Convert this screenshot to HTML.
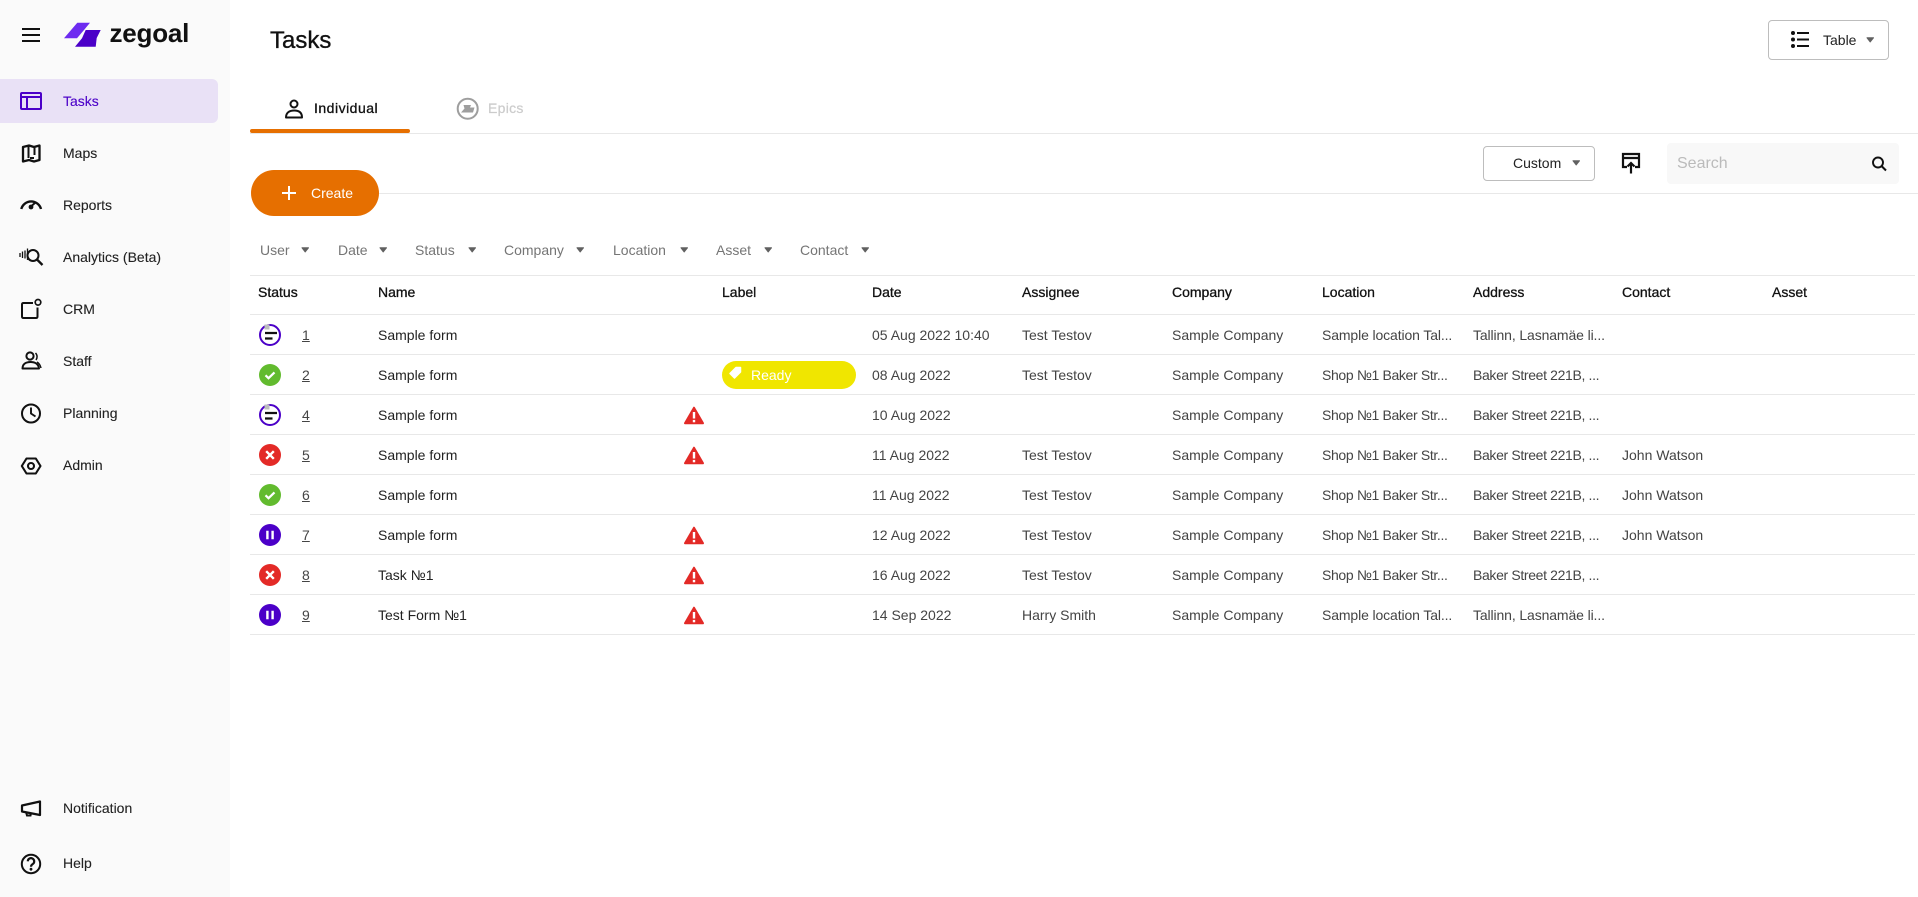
<!DOCTYPE html>
<html lang="en"><head><meta charset="utf-8"><title>Tasks</title>
<style>
html,body{margin:0;padding:0;width:1918px;height:897px;overflow:hidden;background:#fff}
body{position:relative;font-family:"Liberation Sans",sans-serif;font-size:14px;color:#222}
.a{position:absolute;white-space:nowrap}
#side{position:absolute;left:0;top:0;width:230px;height:897px;background:#fafafa}
#act{position:absolute;left:0;top:79px;width:218px;height:44px;background:#e9e1f6;border-radius:0 6px 6px 0}
.m{position:absolute;left:63px;line-height:20px;color:#222;-webkit-text-stroke:.1px #222}
.ln{position:absolute;height:1px;background:#e8e8e8}
.f{position:absolute;top:240px;line-height:20px;color:#757575}
.h{position:absolute;top:282px;line-height:20px;color:#111;-webkit-text-stroke:.3px #111}
.c{position:absolute;line-height:20px;color:#444;white-space:nowrap}
.n{color:#222}
.u{text-decoration:underline}
.s{letter-spacing:-.35px}
.t{letter-spacing:-.12px}
.r{position:absolute;left:0;width:1918px;height:20px}
.btn{position:absolute;border:1px solid #bdbdbd;border-radius:4px;box-sizing:border-box;background:#fff}
</style></head><body>
<div id="side"><div id="act"></div></div>
<div class="a" style="left:109.5px;top:15px;font-size:26px;line-height:36px;font-weight:700;color:#111;letter-spacing:-.2px">zegoal</div>

<div class="m" style="top:91px;color:#4b00c8;-webkit-text-stroke:.1px #4b00c8">Tasks</div>
<div class="m" style="top:143px">Maps</div>
<div class="m" style="top:195px">Reports</div>
<div class="m" style="top:247px">Analytics (Beta)</div>
<div class="m" style="top:299px">CRM</div>
<div class="m" style="top:351px">Staff</div>
<div class="m" style="top:403px">Planning</div>
<div class="m" style="top:455px">Admin</div>
<div class="m" style="top:798px">Notification</div>
<div class="m" style="top:853px">Help</div>

<div class="a" style="left:270px;top:27px;font-size:24px;line-height:28px;color:#111;-webkit-text-stroke:.35px #111">Tasks</div>
<div class="a" style="left:314px;top:98px;line-height:20px;color:#111;letter-spacing:.5px;-webkit-text-stroke:.3px #111">Individual</div>
<div class="a" style="left:488px;top:98px;line-height:20px;color:#ccc;letter-spacing:.3px;-webkit-text-stroke:.25px #ccc">Epics</div>

<div class="ln" style="left:250px;top:133px;width:1668px"></div>
<div class="a" style="left:250px;top:129px;width:160px;height:4px;background:#e66f00;border-radius:2px"></div>
<div class="ln" style="left:370px;top:193px;width:1548px"></div>
<div class="a" style="left:251px;top:170px;width:128px;height:46px;background:#e66f00;border-radius:23px"></div>
<div class="a" style="left:311px;top:183px;line-height:20px;color:#fff">Create</div>

<div class="btn" style="left:1768px;top:20px;width:121px;height:40px"></div>
<div class="a" style="left:1823px;top:30px;line-height:20px;color:#222">Table</div>
<div class="btn" style="left:1483px;top:146px;width:112px;height:35px"></div>
<div class="a" style="left:1513px;top:153px;line-height:20px;color:#222">Custom</div>
<div class="a" style="left:1667px;top:143px;width:232px;height:41px;background:#f8f8f8;border-radius:4px"></div>
<div class="a" style="left:1677px;top:154px;line-height:20px;font-size:16px;color:#bbb">Search</div>

<div class="f" style="left:260px">User</div>
<div class="f" style="left:338px">Date</div>
<div class="f" style="left:415px">Status</div>
<div class="f" style="left:504px">Company</div>
<div class="f" style="left:613px">Location</div>
<div class="f" style="left:716px">Asset</div>
<div class="f" style="left:800px">Contact</div>

<div class="ln" style="left:250px;top:275px;width:1665px"></div>
<div class="h" style="left:258px">Status</div>
<div class="h" style="left:378px">Name</div>
<div class="h" style="left:722px">Label</div>
<div class="h" style="left:872px">Date</div>
<div class="h" style="left:1022px">Assignee</div>
<div class="h" style="left:1172px">Company</div>
<div class="h" style="left:1322px">Location</div>
<div class="h" style="left:1473px">Address</div>
<div class="h" style="left:1622px">Contact</div>
<div class="h" style="left:1772px">Asset</div>

<div class="ln" style="left:250px;top:314px;width:1665px"></div>
<div class="ln" style="left:250px;top:354px;width:1665px"></div>
<div class="ln" style="left:250px;top:394px;width:1665px"></div>
<div class="ln" style="left:250px;top:434px;width:1665px"></div>
<div class="ln" style="left:250px;top:474px;width:1665px"></div>
<div class="ln" style="left:250px;top:514px;width:1665px"></div>
<div class="ln" style="left:250px;top:554px;width:1665px"></div>
<div class="ln" style="left:250px;top:594px;width:1665px"></div>
<div class="ln" style="left:250px;top:634px;width:1665px"></div>

<div class="r" style="top:325px">
<div class="c u" style="left:302px">1</div><div class="c n" style="left:378px">Sample form</div><div class="c" style="left:872px">05 Aug 2022 10:40</div><div class="c" style="left:1022px">Test Testov</div><div class="c" style="left:1172px">Sample Company</div><div class="c t" style="left:1322px">Sample location Tal...</div><div class="c t" style="left:1473px">Tallinn, Lasnamäe li...</div>
</div>
<div class="r" style="top:365px">
<div class="c u" style="left:302px">2</div><div class="c n" style="left:378px">Sample form</div><div class="c" style="left:872px">08 Aug 2022</div><div class="c" style="left:1022px">Test Testov</div><div class="c" style="left:1172px">Sample Company</div><div class="c s" style="left:1322px">Shop №1 Baker Str...</div><div class="c s" style="left:1473px">Baker Street 221B, ...</div>
</div>
<div class="a" style="left:722px;top:361px;width:134px;height:28px;background:#f0e600;border-radius:14px"></div>
<div class="a" style="left:751px;top:365px;line-height:20px;color:#fff">Ready</div>
<div class="r" style="top:405px">
<div class="c u" style="left:302px">4</div><div class="c n" style="left:378px">Sample form</div><div class="c" style="left:872px">10 Aug 2022</div><div class="c" style="left:1172px">Sample Company</div><div class="c s" style="left:1322px">Shop №1 Baker Str...</div><div class="c s" style="left:1473px">Baker Street 221B, ...</div>
</div>
<div class="r" style="top:445px">
<div class="c u" style="left:302px">5</div><div class="c n" style="left:378px">Sample form</div><div class="c" style="left:872px">11 Aug 2022</div><div class="c" style="left:1022px">Test Testov</div><div class="c" style="left:1172px">Sample Company</div><div class="c s" style="left:1322px">Shop №1 Baker Str...</div><div class="c s" style="left:1473px">Baker Street 221B, ...</div><div class="c" style="left:1622px">John Watson</div>
</div>
<div class="r" style="top:485px">
<div class="c u" style="left:302px">6</div><div class="c n" style="left:378px">Sample form</div><div class="c" style="left:872px">11 Aug 2022</div><div class="c" style="left:1022px">Test Testov</div><div class="c" style="left:1172px">Sample Company</div><div class="c s" style="left:1322px">Shop №1 Baker Str...</div><div class="c s" style="left:1473px">Baker Street 221B, ...</div><div class="c" style="left:1622px">John Watson</div>
</div>
<div class="r" style="top:525px">
<div class="c u" style="left:302px">7</div><div class="c n" style="left:378px">Sample form</div><div class="c" style="left:872px">12 Aug 2022</div><div class="c" style="left:1022px">Test Testov</div><div class="c" style="left:1172px">Sample Company</div><div class="c s" style="left:1322px">Shop №1 Baker Str...</div><div class="c s" style="left:1473px">Baker Street 221B, ...</div><div class="c" style="left:1622px">John Watson</div>
</div>
<div class="r" style="top:565px">
<div class="c u" style="left:302px">8</div><div class="c n" style="left:378px">Task №1</div><div class="c" style="left:872px">16 Aug 2022</div><div class="c" style="left:1022px">Test Testov</div><div class="c" style="left:1172px">Sample Company</div><div class="c s" style="left:1322px">Shop №1 Baker Str...</div><div class="c s" style="left:1473px">Baker Street 221B, ...</div>
</div>
<div class="r" style="top:605px">
<div class="c u" style="left:302px">9</div><div class="c n" style="left:378px">Test Form №1</div><div class="c" style="left:872px">14 Sep 2022</div><div class="c" style="left:1022px">Harry Smith</div><div class="c" style="left:1172px">Sample Company</div><div class="c t" style="left:1322px">Sample location Tal...</div><div class="c t" style="left:1473px">Tallinn, Lasnamäe li...</div>
</div>

<svg width="1918" height="897" viewBox="0 0 1918 897" style="position:absolute;left:0;top:0" fill="none">
<defs>
<g id="tri"><path d="M0 -7.8 L9 7.8 H-9 Z" fill="#e32a27" stroke="#e32a27" stroke-width="2" stroke-linejoin="round"/><path d="M0 -3.5 V3" stroke="#fff" stroke-width="2.4"/><rect x="-1.2" y="4.4" width="2.4" height="2.4" fill="#fff"/></g>
<g id="ok"><circle r="11" fill="#62bb2e"/><path d="M-4.5 .3 L-1.5 3.2 L4.5 -2.6" stroke="#fff" stroke-width="2.2"/></g>
<g id="no"><circle r="11" fill="#e32a27"/><path d="M-3.8 -3.8 L3.8 3.8 M3.8 -3.8 L-3.8 3.8" stroke="#fff" stroke-width="2.4"/></g>
<g id="pa"><circle r="11" fill="#4b00c8"/><path d="M-2.6 -4.2 V4.2 M2.6 -4.2 V4.2" stroke="#fff" stroke-width="2.4"/></g>
<g id="pr"><circle r="10" fill="#fff" stroke="#4b00c8" stroke-width="2"/><rect x="-5.5" y="-10.5" width="5" height="5" fill="#bdbdbd"/><path d="M-5 -2 H7 M-5 3.5 H2.5" stroke="#111" stroke-width="2.2"/></g>
</defs>
<!-- logo -->
<path d="M64 38.3 L77.3 22.7 H90 L84 30 L77 38.3 Z" fill="#6d2bf0"/>
<path d="M85.7 30 H100.7 L96.7 38 L95.7 46.7 H75 L82 38.3 Z" fill="#4b00c8"/>
<!-- hamburger -->
<path d="M22 29 H40 M22 35 H40 M22 41 H40" stroke="#111" stroke-width="2"/>
<!-- tasks -->
<rect x="21" y="93" width="20" height="16" rx="1" stroke="#4b00c8" stroke-width="2"/><path d="M21 97 H41 M27 97 V109" stroke="#4b00c8" stroke-width="2"/>
<!-- maps -->
<path d="M23 147 L29 145.5 L34 147 L39.5 145.5 V160 L34 161.5 L29 160 L23 161.5 Z" stroke="#111" stroke-width="2.3" stroke-linejoin="round"/><path d="M28.5 146 V158 M34.5 147 V155 M30 158 H34" stroke="#111" stroke-width="2"/>
<!-- reports -->
<path d="M21.3 209 A10.2 10.2 0 0 1 41 209" stroke="#111" stroke-width="2.4"/><circle cx="31" cy="207" r="2.4" fill="#111"/><path d="M32 205.5 L35.5 202.5" stroke="#111" stroke-width="2"/>
<!-- analytics -->
<path d="M20 253 V257 M22.5 251.5 V258 M25 250.5 V258.5 M27.5 248.5 V260" stroke="#111" stroke-width="1.3"/><circle cx="33" cy="255.5" r="5.5" stroke="#111" stroke-width="2"/><path d="M37 259.5 L42.5 265" stroke="#111" stroke-width="2.3"/>
<!-- crm -->
<path d="M33 303 H23.5 Q22 303 22 304.5 V316.5 Q22 318 23.5 318 H36 Q37.5 318 37.5 316.5 V307.5" stroke="#111" stroke-width="2"/><circle cx="38" cy="302.3" r="2.8" stroke="#111" stroke-width="1.7"/>
<!-- staff -->
<circle cx="30" cy="356" r="3.6" stroke="#111" stroke-width="2"/><path d="M22.5 368.5 C22.5 364 26 362 30.5 362 C35 362 38.5 364 39 368.5 Z" stroke="#111" stroke-width="2" stroke-linejoin="round"/><path d="M35.5 353 C37.5 355 37.5 358 36 360 M37 362 C39.5 363.5 40.5 366 41 368" stroke="#111" stroke-width="1.5"/>
<!-- planning -->
<circle cx="31" cy="413.5" r="9" stroke="#111" stroke-width="2"/><path d="M31 407.5 V413.5 L35.5 416.5" stroke="#111" stroke-width="1.9"/>
<!-- admin -->
<path d="M21.8 466 L26.5 458.5 H35.8 L40.5 466 L35.8 473.5 H26.5 Z" stroke="#111" stroke-width="2.1" stroke-linejoin="round"/><circle cx="31" cy="466" r="3" stroke="#111" stroke-width="2.1"/>
<!-- notification -->
<path d="M22 805.5 L40 801.5 V815 L22 811.5 Z" stroke="#111" stroke-width="2.2" stroke-linejoin="round"/><path d="M26 812 L27 815.5 H30.5 L31 813" stroke="#111" stroke-width="2"/>
<!-- help -->
<circle cx="31" cy="864" r="9.2" stroke="#111" stroke-width="2"/><path d="M27.8 861.3 A3.2 3.2 0 1 1 32.8 864 C31.5 864.8 31 865.5 31 866.8" stroke="#111" stroke-width="2.2"/><circle cx="31" cy="869.2" r="1.4" fill="#111"/>
<!-- individual -->
<circle cx="294" cy="104" r="3.5" stroke="#111" stroke-width="2"/><path d="M286 117.5 C286 112.5 289.5 110.5 294.2 110.5 C299 110.5 302 112.5 302 117.5 Z" stroke="#111" stroke-width="2" stroke-linejoin="round"/>
<!-- epics -->
<circle cx="467.7" cy="108.7" r="10" stroke="#9e9e9e" stroke-width="2"/><path d="M463.5 105 H471 L470 107.5 H474.5 L473 112.5 H461 L464.5 108.5 Z" fill="#9e9e9e"/>
<!-- create plus -->
<path d="M282 193 H296 M289 186 V200" stroke="#fff" stroke-width="2"/>
<!-- filter arrows -->
<path d="M302 247.8 H308.5 L305.2 252 Z M380 247.8 H386.5 L383.2 252 Z M469 247.8 H475.5 L472.2 252 Z M577 247.8 H583.5 L580.2 252 Z M681 247.8 H687.5 L684.2 252 Z M765 247.8 H771.5 L768.2 252 Z M862 247.8 H868.5 L865.2 252 Z M1867 37.8 H1873.5 L1870.2 42 Z M1573 160.8 H1579.5 L1576.2 165 Z" fill="#616161" stroke="#616161" stroke-linejoin="round"/>
<!-- table icon -->
<circle cx="1793" cy="33" r="2" fill="#111"/><circle cx="1793" cy="39.5" r="2" fill="#111"/><circle cx="1793" cy="46" r="2" fill="#111"/><path d="M1797 33 H1809 M1797 39.5 H1809 M1797 46 H1809" stroke="#111" stroke-width="2"/>
<!-- export -->
<path d="M1627 167 H1623 V154 H1639 V167 H1635 M1623 158 H1639" stroke="#111" stroke-width="2.2"/><path d="M1631 173.5 V163.5 M1627.5 166.5 L1631 163 L1634.5 166.5" stroke="#111" stroke-width="2.2"/>
<!-- search -->
<circle cx="1878" cy="162.5" r="5" stroke="#111" stroke-width="1.9"/><path d="M1881.5 166 L1886 170.5" stroke="#111" stroke-width="2"/>
<!-- status -->
<use href="#pr" x="270" y="335"/><use href="#ok" x="270" y="375"/><use href="#pr" x="270" y="415"/><use href="#no" x="270" y="455"/><use href="#ok" x="270" y="495"/><use href="#pa" x="270" y="535"/><use href="#no" x="270" y="575"/><use href="#pa" x="270" y="615"/>
<!-- warnings -->
<use href="#tri" x="694" y="415.5"/><use href="#tri" x="694" y="455.5"/><use href="#tri" x="694" y="535.5"/><use href="#tri" x="694" y="575.5"/><use href="#tri" x="694" y="615.5"/>
<!-- tag -->
<path d="M730 373.5 L736 367.5 L740.5 367.5 L740.5 372 L734.5 378 Z" fill="#fff" stroke="#fff" stroke-linejoin="round" stroke-width="1.5"/>
</svg>
</body></html>
